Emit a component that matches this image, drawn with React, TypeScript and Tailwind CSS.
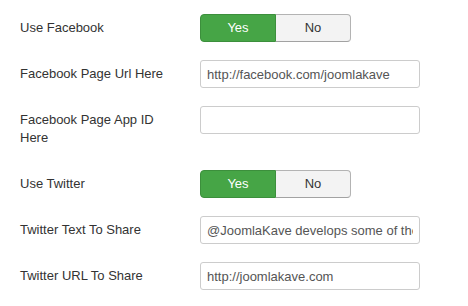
import React from "react";

type Row =
  | { label: string; kind: "toggle"; value: boolean }
  | { label: string; kind: "text"; value: string };

const rows: Row[] = [
  { label: "Use Facebook", kind: "toggle", value: true },
  { label: "Facebook Page Url Here", kind: "text", value: "http://facebook.com/joomlakave" },
  { label: "Facebook Page App ID Here", kind: "text", value: "" },
  { label: "Use Twitter", kind: "toggle", value: true },
  {
    label: "Twitter Text To Share",
    kind: "text",
    value: "@JoomlaKave develops some of the best Joomla extensions",
  },
  { label: "Twitter URL To Share", kind: "text", value: "http://joomlakave.com" },
];

function Toggle({ value }: { value: boolean }) {
  return (
    <div className="flex h-[28px]">
      <button
        className={
          value
            ? "w-[76px] h-full rounded-l-[4px] border border-[#3c8f3c] bg-[#46a546] text-white text-[13px]"
            : "w-[76px] h-full rounded-l-[4px] border border-[#b3b3b3] bg-[#f3f3f3] text-[#333] text-[13px]"
        }
      >
        Yes
      </button>
      <button
        className={
          !value
            ? "w-[75px] h-full rounded-r-[4px] border border-l-0 border-[#3c8f3c] bg-[#46a546] text-white text-[13px]"
            : "w-[75px] h-full rounded-r-[4px] border border-l-0 border-[#b3b3b3] border-b-[#a2a2a2] bg-[#f3f3f3] text-[#333] text-[13px]"
        }
      >
        No
      </button>
    </div>
  );
}

export default function App() {
  return (
    <div
      className="w-[468px] h-[306px] bg-white pt-[14px] pl-[20px] text-[13px] leading-[18px] text-[#333]"
      style={{ fontFamily: '"Liberation Sans", Arial, sans-serif' }}
    >
      {rows.map((r) => (
        <div key={r.label} className="flex mb-[18px]">
          <label className="w-[160px] py-[5px] pr-[10px] shrink-0">{r.label}</label>
          <div className="ml-[20px]">
            {r.kind === "toggle" ? (
              <Toggle value={r.value} />
            ) : (
              <input
                readOnly
                value={r.value}
                className="w-[220px] h-[28px] px-[6px] border border-[#ccc] rounded-[3px] text-[13px] text-[#555] bg-white outline-none"
                style={{ fontFamily: '"Liberation Sans", Arial, sans-serif' }}
              />
            )}
          </div>
        </div>
      ))}
    </div>
  );
}
